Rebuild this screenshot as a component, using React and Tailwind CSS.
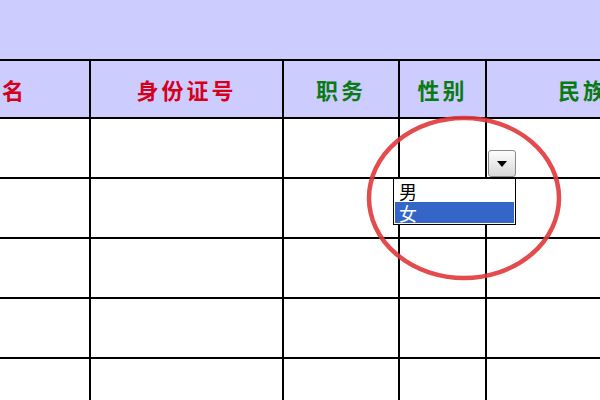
import React from 'react';

const cols = [
  { w: 'w-[151px]', label: '名', color: 'text-[#d4001c]' },
  { w: 'w-[193px]', label: '身份证号', color: 'text-[#d4001c]' },
  { w: 'w-[116px]', label: '职务', color: 'text-[#0a7a14]' },
  { w: 'w-[87px]', label: '性别', color: 'text-[#0a7a14]' },
  { w: 'w-[194px]', label: '民族', color: 'text-[#0a7a14]' },
];

const rows = [0, 1, 2, 3, 4];

export default function App() {
  return (
    <div
      className="relative w-[600px] h-[400px] overflow-hidden bg-white"
      style={{ fontFamily: '"Noto Sans CJK SC", "Noto Sans", sans-serif' }}
    >
      {/* purple title band */}
      <div className="h-[59px] bg-[#ccccff]" />

      <div className="-ml-[60px] w-[741px]">
        {/* header row */}
        <div className="flex h-[60px] bg-[#ccccff] border-y-2 border-black">
          {cols.map((c, i) => (
            <div
              key={i}
              className={`${c.w} shrink-0 flex items-center justify-center border-r-2 border-black font-bold text-[22px] leading-none tracking-[3px] ${c.color}`}
            >
              {c.label}
            </div>
          ))}
        </div>

        {/* body rows */}
        {rows.map((r) => (
          <div key={r} className="flex h-[60px] border-b-2 border-black">
            {cols.map((c, i) => (
              <div key={i} className={`${c.w} shrink-0 border-r-2 border-black`} />
            ))}
          </div>
        ))}
      </div>

      {/* dropdown button */}
      <div className="absolute left-[488px] top-[150px] w-[28px] h-[27px] rounded-[3px] border border-[#8a8a8a] bg-gradient-to-b from-[#fdfdfd] to-[#d8d8d8] flex items-center justify-center">
        <svg width="10" height="6" viewBox="0 0 10 6">
          <polygon points="0,0 10,0 5,6" fill="#000" />
        </svg>
      </div>

      {/* dropdown list */}
      <div className="absolute left-[393px] top-[178px] w-[123px] h-[47px] bg-white border border-black p-[1px]">
        <div className="h-[22px] flex items-center pl-[4px] text-[18px] leading-[18px] text-black">男</div>
        <div className="h-[21px] flex items-center pl-[4px] text-[18px] leading-[18px] text-white bg-[#3466c8]">女</div>
      </div>

      {/* red circle */}
      <svg className="absolute left-0 top-0 pointer-events-none" width="600" height="400">
        <ellipse cx="464" cy="198" rx="95" ry="80" fill="none" stroke="#e0393c" strokeWidth="4.5" opacity="0.9" />
      </svg>
    </div>
  );
}
